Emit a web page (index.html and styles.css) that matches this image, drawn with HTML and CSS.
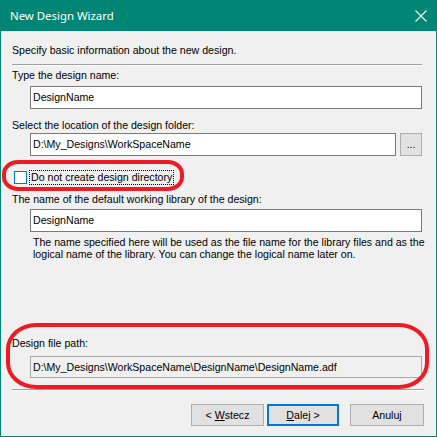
FILE: index.html
```html
<!DOCTYPE html>
<html>
<head>
<meta charset="utf-8">
<link rel="stylesheet" href="styles.css">
</head>
<body>
<div class="window">
  <div class="titlebar">
    <span class="title">New Design Wizard</span>
    <svg class="close" width="12" height="12" viewBox="0 0 12 12"><path d="M0.5 0.5 L11.5 11.5 M11.5 0.5 L0.5 11.5" stroke="#fff" stroke-width="1.1" fill="none"/></svg>
  </div>
  <div class="content">
    <div class="intro">Specify basic information about the new design.</div>
    <div class="sep sep-top"></div>
    <div class="label l1">Type the design name:</div>
    <div class="input i1">DesignName</div>
    <div class="label l2">Select the location of the design folder:</div>
    <div class="row r2">
      <div class="input i2">D:\My_Designs\WorkSpaceName</div>
      <div class="browse">...</div>
    </div>
    <div class="checkrow">
      <span class="checkbox"></span>
      <span class="checklabel">Do not create design directory</span>
    </div>
    <div class="label l3">The name of the default working library of the design:</div>
    <div class="input i3">DesignName</div>
    <div class="desc">The name specified here will be used as the file name for the library files and as the logical name of the library. You can change the logical name later on.</div>
    <div class="label l4">Design file path:</div>
    <div class="input i4 readonly">D:\My_Designs\WorkSpaceName\DesignName\DesignName.adf</div>
    <div class="sep sep-bottom"></div>
    <div class="buttons">
      <div class="btn"><span>&lt; <u>W</u>stecz</span></div>
      <div class="btn default"><span><u>D</u>alej &gt;</span></div>
      <div class="btn cancel"><span>Anuluj</span></div>
    </div>
  </div>
  <div class="mark mark1"></div>
  <div class="mark mark2"></div>
</div>
</body>
</html>
```
FILE: styles.css
```css
* { box-sizing: border-box; }
html, body { margin: 0; padding: 0; background: #f0f0f0; }
body { font-family: "Liberation Sans", Arial, sans-serif; font-size: 10.6px; color: #000; }

.window {
  position: relative;
  width: 437px;
  height: 437px;
  background: #f0f0f0;
  border: 1px solid #018574;
  border-top: none;
  overflow: hidden;
}

.titlebar {
  height: 31px;
  margin: 0 -1px;
  background: #018574;
  display: flex;
  align-items: center;
  justify-content: space-between;
  padding: 0 10px 0 10px;
}
.title {
  color: #fff;
  font-family: "Segoe UI", "Noto Sans", "Open Sans", sans-serif;
  font-size: 11.4px;
  margin-top: -1px;
}
.close { margin-right: 0; margin-top: 0; }

.content {
  padding: 0 14px 0 11px;
  display: flex;
  flex-direction: column;
}

.intro, .label { line-height: 13px; height: 13px; white-space: nowrap; }
.intro { margin-top: 13px; }

.sep { height: 2px; border-top: 1px solid #a0a0a0; border-bottom: 1px solid #ffffff; }
.sep-top { margin-top: 7px; }
.sep-bottom { margin-top: 11px; margin-right: -2px; }

.l1 { margin-top: 3px; }
.l2 { margin-top: 10px; }
.l3 { margin-top: 8px; }
.l4 { margin-top: 77px; }

.input {
  height: 23px;
  border: 1px solid #7a7a7a;
  background: #fff;
  padding: 0 2px;
  line-height: 21px;
  white-space: nowrap;
  margin-left: 18px;
}
.i1 { margin-top: 4px; }
.i3 { margin-top: 3px; }
.i4 { margin-top: 6px; height: 22px; line-height: 20px; }
.readonly { background: #f0f0f0; border-color: #a8a8a8; }

.row { display: flex; gap: 4px; margin-left: 18px; }
.r2 { margin-top: 1px; }
.r2 .input { margin-left: 0; flex: 1; }
.browse {
  width: 22px;
  height: 23px;
  background: #e1e1e1;
  border: 1px solid #adadad;
  text-align: center;
  line-height: 22px;
  font-size: 10px;
}

.checkrow {
  margin-top: 13px;
  height: 16px;
  display: flex;
  align-items: center;
  margin-left: 2px;
}
.checkbox {
  width: 13px;
  height: 13px;
  border: 1px solid #0078d7;
  background: #fff;
}
.checklabel {
  margin-left: 2px;
  border: 1px dotted #000;
  padding: 0 1px 0 1px;
  line-height: 13px;
  white-space: nowrap;
}

.desc {
  margin-top: 4px;
  margin-left: 21px;
  margin-right: -8px;
  line-height: 12px;
}

.buttons {
  margin-top: 13px;
  margin-right: -2px;
  display: flex;
  justify-content: flex-end;
}
.btn {
  width: 73px;
  height: 22px;
  background: #e1e1e1;
  border: 1px solid #adadad;
  display: flex;
  align-items: center;
  justify-content: center;
  margin-left: 3px;
}
.btn.default { border: 2px solid #0078d7; width: 72px; }
.btn.cancel { margin-left: 11px; width: 74px; }

.mark {
  position: absolute;
  border: 4px solid #ed1c24;
  pointer-events: none;
}
.mark1 {
  left: 1px;
  top: 160px;
  width: 182px;
  height: 31px;
  border-radius: 16px / 14px;
}
.mark2 {
  left: 5px;
  top: 323px;
  width: 423px;
  height: 66px;
  border-radius: 30px / 26px;
}
```
